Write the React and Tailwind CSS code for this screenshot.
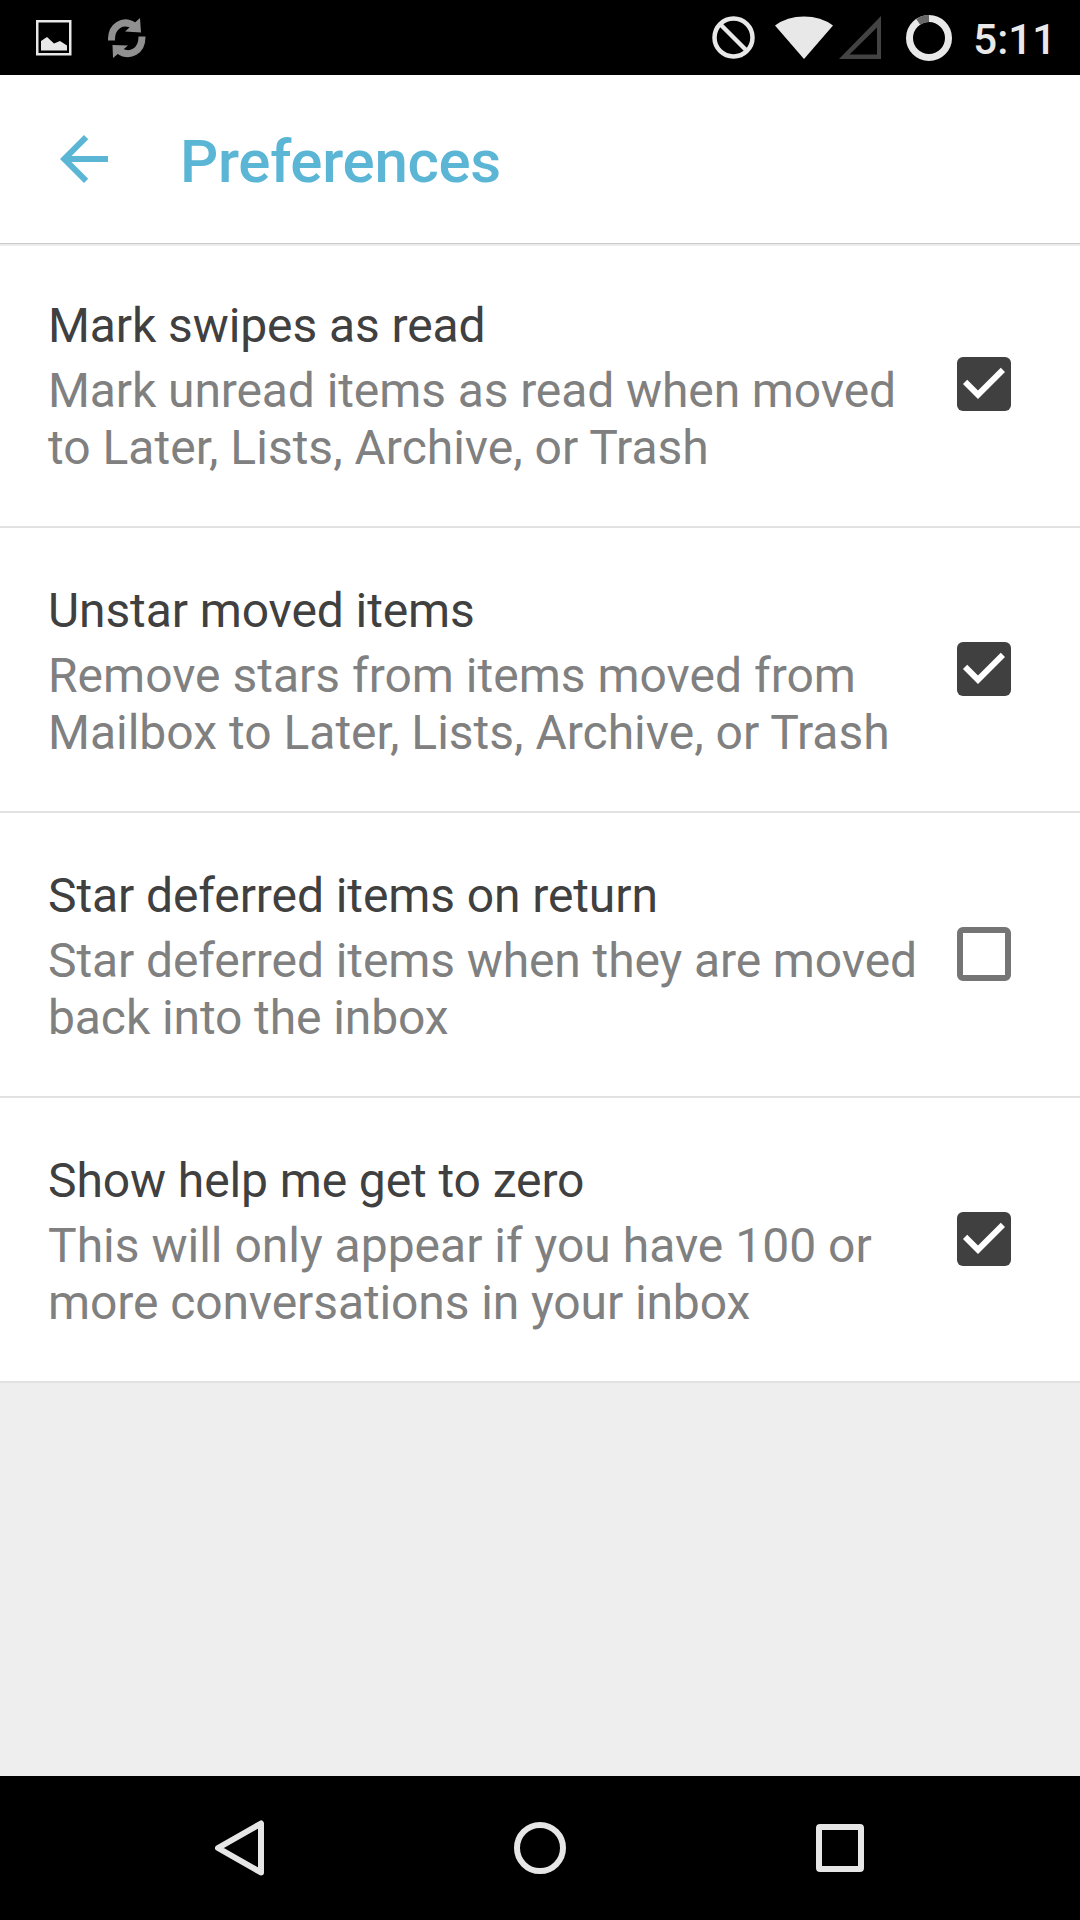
import { useState } from 'react';

const TIGHT = 'tracking-[-0.1px]';
const NORMAL = 'tracking-normal';

const PREFERENCES = [
  { id: 'swipes', title: 'Mark swipes as read', lines: [['Mark unread items as read when moved', TIGHT], ['to Later, Lists, Archive, or Trash', NORMAL]], on: true },
  { id: 'unstar', title: 'Unstar moved items', lines: [['Remove stars from items moved from', NORMAL], ['Mailbox to Later, Lists, Archive, or Trash', NORMAL]], on: true },
  { id: 'deferred', title: 'Star deferred items on return', lines: [['Star deferred items when they are moved', TIGHT], ['back into the inbox', TIGHT]], on: false },
  { id: 'zero', title: 'Show help me get to zero', lines: [['This will only appear if you have 100 or', NORMAL], ['more conversations in your inbox', TIGHT]], on: true },
];

function StatusBar() {
  return (
    <div className="h-[75px] shrink-0 bg-black flex items-center justify-between pl-9 pr-6">
      <div className="flex items-center gap-9">
        <svg width="36" height="36" viewBox="0 0 36 36">
          <rect x="1.25" y="1.25" width="33" height="33" fill="none" stroke="#e8e8e8" strokeWidth="2.5" />
          <path d="M5 30.500V21L11 17l7 6.500 6-2.500 7 4.500v5z" fill="#e8e8e8" />
        </svg>
        <svg width="38" height="42" viewBox="0 0 38 42">
          <g fill="none" stroke="#909090" strokeWidth="7">
            <path d="M3.500 23.500C3 9 15 1.500 26 9" />
            <path d="M34 19.500C34.200 34 22 41 11 33.500" />
          </g>
          <path d="M32 1L33 15.500 17 14.500zM5 41L4.500 28 20 28.500z" fill="#909090" />
        </svg>
      </div>
      <div className="flex items-center">
        <svg width="43" height="43" viewBox="0 0 43 43" fill="none" stroke="#e8e8e8" strokeWidth="4.500">
          <circle cx="21.5" cy="21.5" r="19" />
          <path d="M8 8l27 27" />
        </svg>
        <svg className="ml-5" width="58" height="43" viewBox="0 0 58 43">
          <path d="M29 43L0 9.500Q12 0.500 29 0.500T58 9.500z" fill="#e8e8e8" />
        </svg>
        <svg className="ml-1.5" width="42" height="43" viewBox="0 0 42 43">
          <path fillRule="evenodd" d="M42 0V43H0zM38 11.500L10.500 38.500H38z" fill="#434343" />
        </svg>
        <svg className="ml-[25px]" width="46" height="46" viewBox="0 0 46 46" fill="none" strokeWidth="7">
          <circle cx="23" cy="23" r="19.500" stroke="#e8e8e8" />
          <path d="M12.200 6.800A19.500 19.500 0 0 1 23 3.500" stroke="#686868" />
        </svg>
        <span className="ml-[21px] pt-[5px] text-[42px] leading-none font-medium text-[#e8e8e8]">5:11</span>
      </div>
    </div>
  );
}

function Checkbox({ checked, onChange, label }) {
  return (
    <button role="checkbox" aria-checked={checked} aria-label={label} onClick={onChange} className={`size-[54px] shrink-0 rounded-md ${checked ? 'bg-[#404040]' : 'border-[6px] border-[#757575]'}`}>
      {checked && (
        <svg viewBox="3 3 18 18" className="size-full" fill="#fff"><path d="M10 17l-5-5 1.410-1.410L10 14.170l7.590-7.590L19 8z" /></svg>
      )}
    </button>
  );
}

function PreferenceRow({ title, lines, checked, onChange }) {
  return (
    <div className="h-[285px] flex items-start justify-between pl-12 pr-[69px] border-b-2 border-[#e2e2e2]">
      <div className="pt-[53px] text-5xl whitespace-nowrap">
        <h2 className="leading-[60px] tracking-[-0.1px] text-[#404040]">{title}</h2>
        <p className="mt-1.5 leading-[57px] text-[#808080]">
          {lines.map(([text, tracking]) => (
            <span key={text} className={`block ${tracking}`}>{text}</span>
          ))}
        </p>
      </div>
      <div className="pt-[114px]">
        <Checkbox checked={checked} onChange={onChange} label={title} />
      </div>
    </div>
  );
}

function NavBar() {
  return (
    <div className="h-36 shrink-0 bg-black flex items-center pl-[212px] gap-[248px]">
      <svg width="54" height="56" viewBox="0 0 54 56" fill="none" stroke="#e6e6e6" strokeWidth="6" strokeLinejoin="round">
        <path d="M6 28L49 3.500V52.500z" />
      </svg>
      <div className="size-[52px] rounded-full border-[6px] border-[#e6e6e6]" />
      <div className="ml-0.5 size-12 rounded border-[6px] border-[#e6e6e6]" />
    </div>
  );
}

export default function App() {
  const [enabled, setEnabled] = useState(() => Object.fromEntries(PREFERENCES.map((p) => [p.id, p.on])));
  const toggle = (id) => setEnabled((prev) => ({ ...prev, [id]: !prev[id] }));

  return (
    <div className="w-[1080px] h-[1920px] flex flex-col overflow-hidden bg-[#eeeeee] font-['Roboto',sans-serif]">
      <StatusBar />
      <header className="h-[168px] shrink-0 bg-white flex items-center pl-12 relative z-10 shadow-[0_1px_0_#cacaca,0_3px_0_#ececec]">
        <svg width="72" height="72" viewBox="0 0 24 24" fill="#5bb5d5"><path d="M20 11H7.830l5.590-5.590L12 4l-8 8 8 8 1.410-1.410L7.830 13H20v-2z" /></svg>
        <h1 className="ml-[60px] pt-[5px] text-6xl font-medium tracking-[-0.3px] text-[#5bb5d5]">Preferences</h1>
      </header>
      <main className="bg-white">
        {PREFERENCES.map((p) => (
          <PreferenceRow key={p.id} title={p.title} lines={p.lines} checked={enabled[p.id]} onChange={() => toggle(p.id)} />
        ))}
      </main>
      <div className="flex-1" />
      <NavBar />
    </div>
  );
}
